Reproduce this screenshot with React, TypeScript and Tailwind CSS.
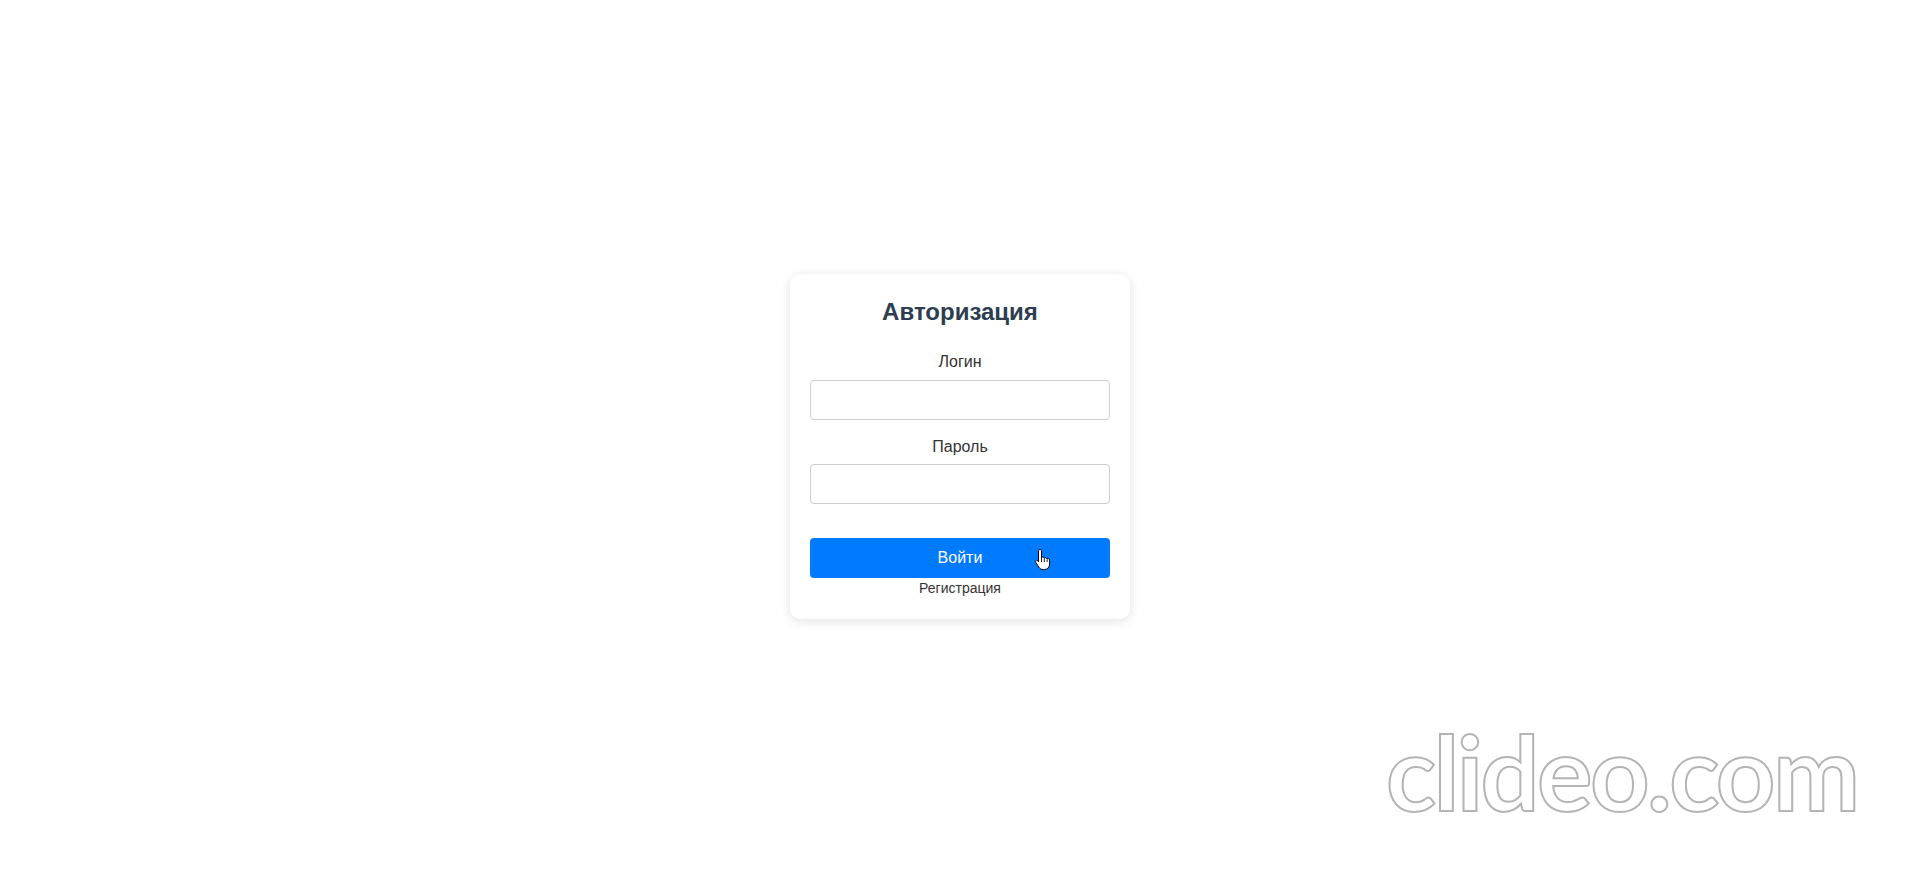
import React from 'react';

const HandCursor: React.FC = () => (
  <svg width="19" height="24" viewBox="0 0 19 24" className="absolute left-[1034px] top-[548px] pointer-events-none">
    <path
      d="M6 1.5c.8 0 1.5.7 1.5 1.5V9.5c.3-.3.8-.5 1.3-.5.8 0 1.4.5 1.5 1.2.3-.3.8-.5 1.3-.5.8 0 1.4.6 1.5 1.3.3-.2.6-.3 1-.3.9 0 1.5.7 1.5 1.5V16c0 3-2 5.5-5 5.5H9c-1.8 0-3-.8-4-2.2L1.8 14.5c-.5-.7-.3-1.6.4-2 .6-.4 1.4-.2 1.8.3L4.5 14V3c0-.8.7-1.5 1.5-1.5z"
      fill="#ffffff"
      stroke="#000000"
      strokeWidth="1"
      strokeLinejoin="round"
    />
    <path d="M7.5 9.5V14M10.3 10.5V14M13.1 11.5V14" stroke="#000000" strokeWidth="0.9" />
  </svg>
);

export default function App() {
  return (
    <div className="relative min-h-screen bg-white flex items-center justify-center font-['Liberation_Sans',Arial,sans-serif] overflow-hidden">
      <div className="w-[340px] bg-white rounded-[10px] shadow-[0_2px_12px_rgba(0,0,0,0.12)] px-5 pt-5 pb-[21px] flex flex-col">
        <h2 className="mt-[2px] text-center text-[24px] leading-[32px] font-bold text-[#2c3e50] mb-[22px]">Авторизация</h2>

        <label className="text-center text-[16px] leading-[24px] text-[#333] mb-[6px]">Логин</label>
        <input type="text" className="h-10 w-full border border-[#ccc] rounded-[4px] px-2 outline-none" />

        <label className="text-center text-[16px] leading-[24px] text-[#333] mt-[15px] mb-[5px]">Пароль</label>
        <input type="password" className="h-10 w-full border border-[#ccc] rounded-[4px] px-2 outline-none" />

        <button className="mt-[34px] h-10 w-full bg-[#007bff] text-white text-[16px] rounded-[4px]">Войти</button>
        <a className="text-center text-[14px] leading-[20px] text-[#333]">Регистрация</a>
      </div>

      <HandCursor />

      <div className="absolute left-[1386px] top-[719px] pointer-events-none select-none font-['Lato',sans-serif] font-bold text-[104px] leading-[1] text-white [-webkit-text-stroke:2px_#b4b4b4] tracking-[-2.6px]">
        clideo.com
      </div>
    </div>
  );
}
